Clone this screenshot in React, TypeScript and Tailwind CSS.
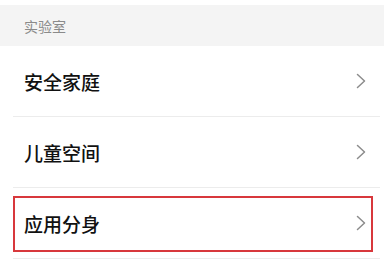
const FONT = "font-['Noto_Sans_CJK_SC','Noto_Sans',sans-serif]"

// Right chevron, thin grey stroke
function Chevron() {
  return (
    <svg width="10" height="16" viewBox="0 0 10 16" fill="none" aria-hidden="true">
      <path d="M1.5 1.5 L8.5 8 L1.5 14.5" stroke="#8c8c8c" strokeWidth="1.5" strokeLinecap="round" strokeLinejoin="round" />
    </svg>
  )
}

interface RowProps {
  label: string
  highlighted?: boolean
}

function Row({ label, highlighted = false }: RowProps) {
  return (
    <div className="relative">
      <div className="flex h-[70px] items-center justify-between pl-6 pr-[18px]">
        <span className="text-[19px] font-medium leading-none text-[#111]">{label}</span>
        <Chevron />
      </div>
      {highlighted && (
        <div className="pointer-events-none absolute left-[13px] right-[11px] top-[8px] bottom-[7px] border-2 border-[#d8383c]" />
      )}
      <div className="ml-[13px] mr-1 h-px bg-[#ececec]" />
    </div>
  )
}

export default function App() {
  return (
    <div className={`h-[265px] w-[384px] overflow-hidden bg-white ${FONT}`}>
      <div className="mt-[5px] flex h-[41px] items-center bg-[#f4f4f4] px-6">
        <span className="text-[14px] leading-none text-[#8a8a8a]">实验室</span>
      </div>
      <Row label="安全家庭" />
      <Row label="儿童空间" />
      <Row label="应用分身" highlighted />
    </div>
  )
}
